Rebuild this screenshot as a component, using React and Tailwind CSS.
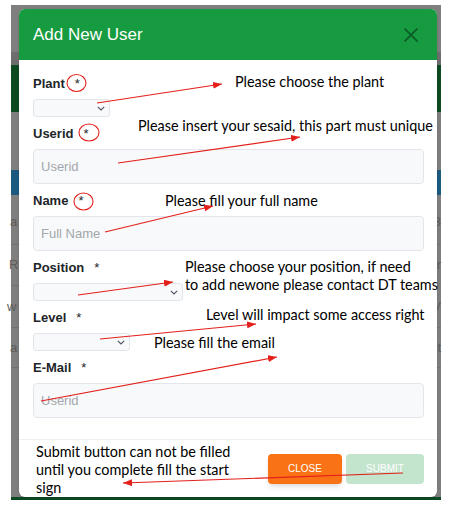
function Label({ text, gap = 'ml-[10px]' }) {
  return (
    <div className="h-[20px] flex items-center text-[13px] font-bold text-[#212529]">
      {text}
      <span className={`${gap} font-normal`}>*</span>
    </div>
  );
}

function TextInput({ placeholder }) {
  return (
    <div className="mt-[5px] h-[35px] w-full rounded-[4px] border border-[#e2e5e9] bg-[#f8f9fa] pl-[7px] flex items-center text-[13px] text-[#a3a7ac]">
      {placeholder}
    </div>
  );
}

function Select({ width }) {
  return (
    <div className={`mt-[5px] h-[18px] ${width} rounded-[3px] border border-[#e2e5e9] bg-[#f8f9fa] flex items-center justify-end pr-[4px]`}>
      <svg width="8" height="5" viewBox="0 0 8 5" fill="none">
        <path d="M0.8 0.8 L4 4 L7.2 0.8" stroke="#4b5563" strokeWidth="1.1" />
      </svg>
    </div>
  );
}

function Note({ className, children }) {
  return (
    <div className={`absolute text-[14.4px] leading-[18px] text-black whitespace-nowrap ${className}`} style={{ fontFamily: 'Lato, "Open Sans", sans-serif' }}>
      {children}
    </div>
  );
}

const arrows = [
  [97, 103, 222, 84],
  [118, 163, 300, 137],
  [105, 232, 213, 206],
  [78, 295, 173, 282],
  [100, 339, 256, 324],
  [41, 401, 277, 357],
  [403, 473, 123, 483],
];

export default function App() {
  return (
    <div className="relative w-[453px] h-[514px] bg-white overflow-hidden" style={{ fontFamily: '"Liberation Sans", Arial, sans-serif' }}>
      {/* page behind the dimmed backdrop */}
      <div className="ml-[11px] mt-[5px] w-[430px] h-[495px] bg-[#7f7f7f] flex flex-col">
        <div className="h-[47px]" />
        <div className="h-[13px] bg-[#6e6e6e]" />
        <div className="h-[47px] bg-[#0e4a21]" />
        <div className="h-[58px]" />
        <div className="h-[25px] bg-[#1c5a80]" />
        <div className="h-[50px] border-b border-[#727272] flex items-center justify-between text-[13px] text-[#5c5c5c] pt-[4px]">
          <span className="-ml-[1px]">a</span><span>3</span>
        </div>
        <div className="h-[41px] border-b border-[#727272] flex items-center justify-between text-[13px] text-[#5c5c5c]">
          <span className="-ml-[2px]">R'</span><span>r</span>
        </div>
        <div className="h-[42px] border-b border-[#727272] flex items-center justify-between text-[13px] text-[#5c5c5c]">
          <span className="-ml-[4px]">w</span><span>V</span>
        </div>
        <div className="h-[40px] border-b border-[#727272] flex items-center justify-between text-[13px] text-[#5c5c5c]">
          <span className="-ml-[1px]">a</span><span>t</span>
        </div>
        <div className="mt-auto h-[3px] bg-[#0e4a21]" />
      </div>

      {/* modal */}
      <div className="absolute left-[19px] top-[9px] w-[418px] h-[488px] bg-white rounded-[6px] overflow-hidden flex flex-col shadow-sm">
        <div className="h-[51px] shrink-0 bg-[#179b40] flex items-center justify-between pl-[14px] pr-[13px]">
          <h2 className="text-[17px] text-white">Add New User</h2>
          <svg width="14" height="14" viewBox="0 0 14 14" className="mr-[6px]">
            <path d="M0.5 0.5 L13.5 13.5 M13.5 0.5 L0.5 13.5" stroke="#0c5a26" strokeWidth="1.7" />
          </svg>
        </div>

        <div className="flex-1 pl-[14px] pr-[13px] pt-[14px] flex flex-col gap-[7px]">
          <div>
            <Label text="Plant" />
            <Select width="w-[77px]" />
          </div>
          <div>
            <Label text="Userid" />
            <TextInput placeholder="Userid" />
          </div>
          <div>
            <Label text="Name" />
            <TextInput placeholder="Full Name" />
          </div>
          <div>
            <Label text="Position" />
            <Select width="w-[150px]" />
          </div>
          <div>
            <Label text="Level" />
            <Select width="w-[97px]" />
          </div>
          <div>
            <Label text="E-Mail" />
            <TextInput placeholder="Userid" />
          </div>
        </div>

        <div className="h-[58px] shrink-0 border-t border-[#eef0f2] flex items-center justify-end gap-[4px] pr-[13px]">
          <button className="w-[74px] h-[30px] rounded-[4px] bg-[#f97316] text-white text-[10px] shadow-md">CLOSE</button>
          <button className="w-[78px] h-[30px] rounded-[4px] bg-[#c3e5cd] text-white text-[10px]">SUBMIT</button>
        </div>
      </div>

      {/* annotations */}
      <Note className="left-[235px] top-[73px]">Please choose the plant</Note>
      <Note className="left-[138px] top-[117px]">Please insert your sesaid, this part must unique</Note>
      <Note className="left-[165px] top-[192px]">Please fill your full name</Note>
      <Note className="left-[185px] top-[258px]">
        Please choose your position, if need
        <br />
        to add newone please contact DT teams
      </Note>
      <Note className="left-[206px] top-[306px]">Level will impact some access right</Note>
      <Note className="left-[154px] top-[334px]">Please fill the email</Note>
      <Note className="left-[36px] top-[443px] leading-[18.3px]">
        Submit button can not be filled
        <br />
        until you complete fill the start
        <br />
        sign
      </Note>

      <svg className="absolute inset-0 pointer-events-none" width="453" height="514">
        <defs>
          <marker id="ah" markerWidth="9" markerHeight="7" refX="9" refY="3.5" orient="auto" markerUnits="userSpaceOnUse">
            <path d="M0 0 L9 3.5 L0 7 z" fill="#e3201b" />
          </marker>
        </defs>
        {arrows.map(([x1, y1, x2, y2], i) => (
          <line key={i} x1={x1} y1={y1} x2={x2} y2={y2} stroke="#e3201b" strokeWidth="1.2" markerEnd="url(#ah)" />
        ))}
        <ellipse cx="76.5" cy="83" rx="9.5" ry="8.5" fill="none" stroke="#e3201b" strokeWidth="1.1" />
        <ellipse cx="89" cy="132.5" rx="10" ry="8.5" fill="none" stroke="#e3201b" strokeWidth="1.1" />
        <ellipse cx="83.5" cy="201.5" rx="9.5" ry="8.5" fill="none" stroke="#e3201b" strokeWidth="1.1" />
      </svg>
    </div>
  );
}
